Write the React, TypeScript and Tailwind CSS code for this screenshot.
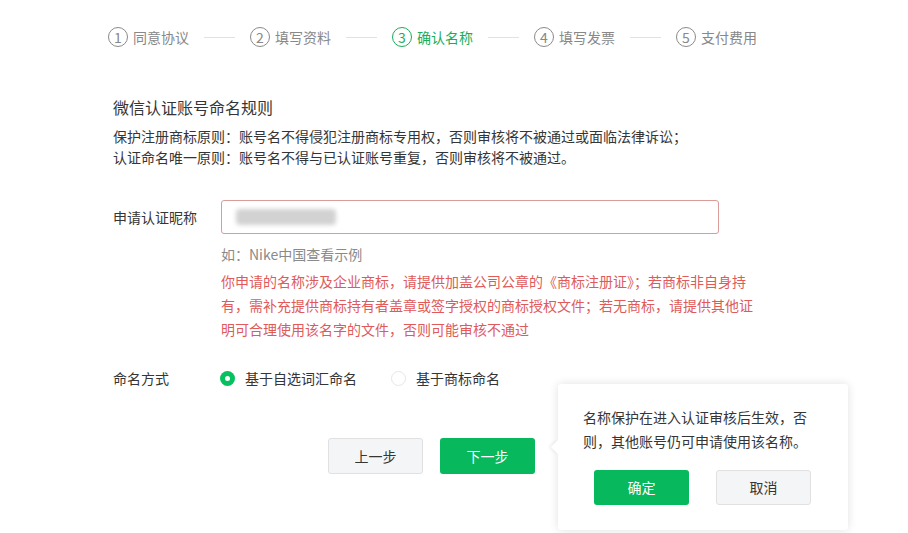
const steps = ["同意协议", "填写资料", "确认名称", "填写发票", "支付费用"];
const current = 2;

function Steps() {
  return (
    <div className="flex items-center pl-[108px] pt-[27px]">
      {steps.map((s, i) => (
        <div key={s} className="flex items-center">
          {i > 0 && <span className="mx-[15px] block h-px w-[31px] bg-[#e2e2e2]" />}
          <div
            className={`flex items-center gap-[5px] text-[14px] leading-5 ${
              i === current ? "text-[#1aad5a]" : "text-[#888]"
            }`}
          >
            <span
              className={`flex h-[20px] w-[20px] items-center justify-center rounded-full border text-[14px] ${
                i === current ? "border-[#1aad5a]" : "border-[#8a8a8a]"
              }`}
            >
              {i + 1}
            </span>
            <span>{s}</span>
          </div>
        </div>
      ))}
    </div>
  );
}

function Radio({ checked, label }: { checked: boolean; label: string }) {
  return (
    <label className="flex items-center gap-[10px]">
      {checked ? (
        <span className="flex h-[15px] w-[15px] items-center justify-center rounded-full bg-[#07c160]">
          <span className="block h-[5px] w-[5px] rounded-full bg-white" />
        </span>
      ) : (
        <span className="block h-[15px] w-[15px] rounded-full border border-[#e6e6e6] bg-white" />
      )}
      <span>{label}</span>
    </label>
  );
}

export default function App() {
  return (
    <div
      className="relative h-[533px] w-[908px] overflow-hidden bg-white text-[#353535]"
      style={{ fontFamily: '"Noto Sans CJK SC", "Microsoft YaHei", sans-serif' }}
    >
      <Steps />

      <div className="pl-[113px]">
        <h2 className="mt-[50px] text-[16px] leading-5">微信认证账号命名规则</h2>
        <div className="mt-[9px] text-[14px] leading-[21px]">
          <p>保护注册商标原则：账号名不得侵犯注册商标专用权，否则审核将不被通过或面临法律诉讼；</p>
          <p>认证命名唯一原则：账号名不得与已认证账号重复，否则审核将不被通过。</p>
        </div>

        <div className="mt-8 flex items-center text-[14px]">
          <span className="w-[108px]">申请认证昵称</span>
          <div className="flex h-[34px] w-[498px] items-center rounded-[3px] border border-[#d99c9a] px-[14px]">
            <span className="block h-[16px] w-[100px] rounded-sm bg-[#d2d2d2] blur-[2px]" />
          </div>
        </div>

        <div className="ml-[108px] mt-[10px] text-[14px] leading-5 text-[#8a8a8a]">如：Nike中国查看示例</div>
        <p className="ml-[108px] mt-[5px] w-[536px] text-[14px] leading-6 text-[#e05a5a]">
          你申请的名称涉及企业商标，请提供加盖公司公章的《商标注册证》；若商标非自身持有，需补充提供商标持有者盖章或签字授权的商标授权文件；若无商标，请提供其他证明可合理使用该名字的文件，否则可能审核不通过
        </p>

        <div className="mt-[27px] flex items-center text-[14px] leading-5">
          <span className="w-[107px]">命名方式</span>
          <div className="flex items-center gap-[34px]">
            <Radio checked label="基于自选词汇命名" />
            <Radio checked={false} label="基于商标命名" />
          </div>
        </div>

        <div className="ml-[215px] mt-[50px] flex gap-[17px] text-[14px]">
          <button className="h-[36px] w-[95px] rounded-[3px] border border-[#e1e1e1] bg-[#f4f5f6] text-[#353535]">
            上一步
          </button>
          <button className="h-[36px] w-[95px] rounded-[3px] bg-[#07b85c] text-white">下一步</button>
        </div>
      </div>

      <div className="absolute left-[558px] top-[384px] h-[146px] w-[290px] rounded-[3px] bg-white px-[25px] pt-[21px] shadow-[0_0_10px_rgba(0,0,0,0.12)]">
        <span className="absolute left-[-5px] top-[58px] block h-[10px] w-[10px] rotate-45 bg-white shadow-[-2px_2px_3px_rgba(0,0,0,0.05)]" />
        <p className="relative w-[230px] text-[14px] leading-6">名称保护在进入认证审核后生效，否则，其他账号仍可申请使用该名称。</p>
        <div className="ml-[11px] mt-[17px] flex gap-[27px] text-[14px]">
          <button className="h-[35px] w-[95px] rounded-[3px] bg-[#07b85c] text-white">确定</button>
          <button className="h-[35px] w-[95px] rounded-[3px] border border-[#e1e1e1] bg-[#f4f5f6] text-[#353535]">
            取消
          </button>
        </div>
      </div>
    </div>
  );
}
